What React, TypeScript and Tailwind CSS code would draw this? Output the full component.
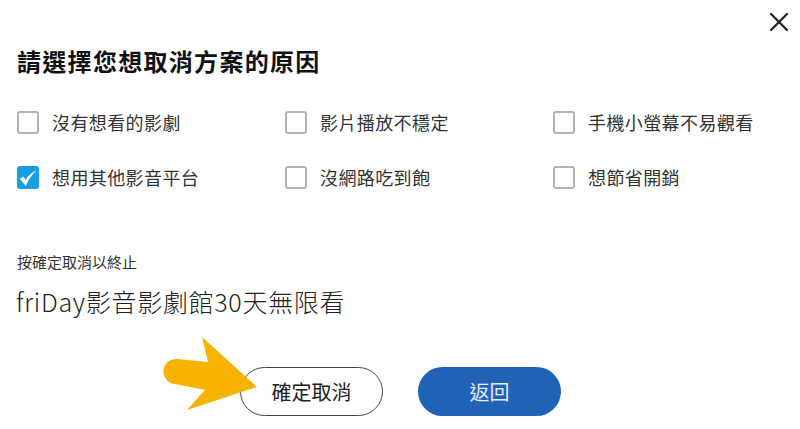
import { X } from "lucide-react";

const font = { fontFamily: '"Noto Sans CJK TC", "Noto Sans", sans-serif' };

const reasons = [
  { label: "沒有想看的影劇", checked: false },
  { label: "影片播放不穩定", checked: false },
  { label: "手機小螢幕不易觀看", checked: false },
  { label: "想用其他影音平台", checked: true },
  { label: "沒網路吃到飽", checked: false },
  { label: "想節省開銷", checked: false },
];

function Box({ checked }: { checked: boolean }) {
  if (checked) {
    return (
      <span className="flex h-[23px] w-[22px] shrink-0 items-center justify-center rounded-[3px] bg-[#1a9ee2]">
        <svg width="20" height="20" viewBox="0 0 20 20">
          <path d="M1.8 10.8 L7.8 18 C10.5 11.5 14 6 18.8 2.2 C13.5 4.2 10 8 7.4 12 L5.6 8.6 Z" fill="#fff" />
        </svg>
      </span>
    );
  }
  return <span className="h-[23px] w-[22px] shrink-0 rounded-[3px] border-2 border-[#b3b3b3] bg-white" />;
}

export default function App() {
  return (
    <div className="relative flex h-[429px] w-[800px] flex-col bg-white text-[#222]" style={font}>
      {/* close */}
      <div className="flex justify-end pr-[5px] pt-[6px]">
        <X size={32} strokeWidth={1.7} className="text-[#222]" />
      </div>

      <h1 className="ml-[17px] mt-[7px] text-[24px] font-bold leading-[32px] tracking-[1.3px] text-[#111]">
        請選擇您想取消方案的原因
      </h1>

      <div className="ml-[17px] mt-[34px] grid grid-cols-[268px_268px_240px] gap-y-[32px]">
        {reasons.map((r) => (
          <label key={r.label} className="flex h-[23px] items-center gap-[13px]">
            <Box checked={r.checked} />
            <span className="whitespace-nowrap text-[18px] leading-[23px] tracking-[0.4px] text-[#333]">{r.label}</span>
          </label>
        ))}
      </div>

      <p className="ml-[17px] mt-[63px] text-[15px] leading-[20px] text-[#333]">按確定取消以終止</p>
      <p className="ml-[16px] mt-[13px] text-[25px] font-light leading-[32px] tracking-[0.7px] text-[#222]">
        friDay影音影劇館30天無限看
      </p>

      <div className="mt-[50px] flex justify-center gap-[35px] pl-[1px]">
        <button className="flex h-[49px] w-[143px] items-center justify-center rounded-full border-[1.5px] border-[#444] bg-white text-[20px] text-[#222]">
          確定取消
        </button>
        <button className="flex h-[49px] w-[143px] items-center justify-center rounded-full bg-[#1f62b7] text-[20px] text-[#e8eefa]">
          返回
        </button>
      </div>

      {/* pointer arrow */}
      <svg className="absolute left-[160px] top-[330px]" width="100" height="85" viewBox="0 0 100 85">
        <path
          d="M42 7 L97 57 L27 80 L45 60 L15 54 A12.5 12.5 0 0 1 17 29 L48 32 Z"
          fill="#f6b300"
        />
      </svg>
    </div>
  );
}
